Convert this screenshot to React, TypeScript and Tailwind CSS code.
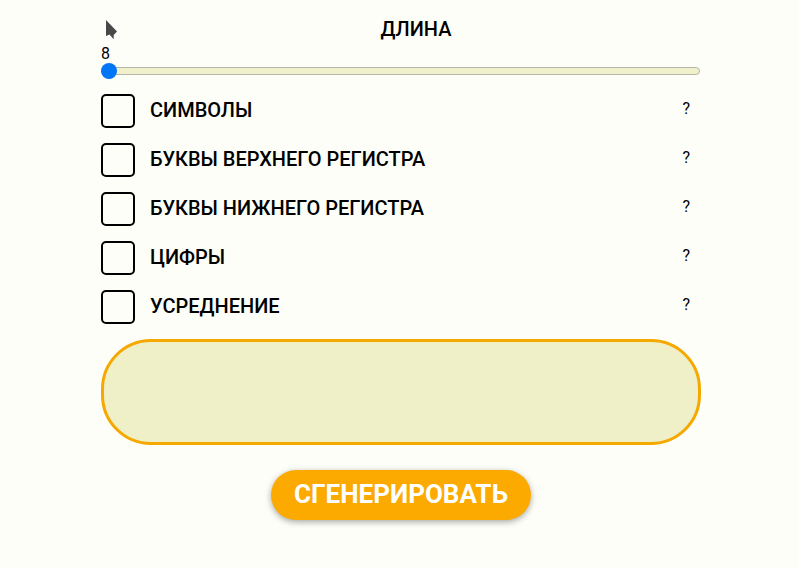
const options = [
  'СИМВОЛЫ',
  'БУКВЫ ВЕРХНЕГО РЕГИСТРА',
  'БУКВЫ НИЖНЕГО РЕГИСТРА',
  'ЦИФРЫ',
  'УСРЕДНЕНИЕ',
];

function Option({ label }: { label: string }) {
  return (
    <div className="flex h-[34px] items-center">
      <label className="flex items-center">
        <input
          type="checkbox"
          className="h-[34px] w-[34px] appearance-none rounded-[5px] border-2 border-black"
        />
        <span className="mb-0.5 ml-[15px] text-[20px] leading-6 font-medium whitespace-nowrap">{label}</span>
      </label>
      <span className="mr-[11px] mb-[5px] ml-auto text-[16px] leading-5">?</span>
    </div>
  );
}

export default function App() {
  return (
    <main className="h-[568px] overflow-hidden bg-[#fefef9] pt-[17px] pl-[101px] font-['Roboto','Liberation_Sans',sans-serif] text-black">
      <svg
        className="pointer-events-none absolute top-[19px] left-[105px] h-[22px] w-[14px]"
        viewBox="0 0 14 22"
        aria-hidden="true"
      >
        <path d="M1 1V17L4.5 15.5L8.7 20.3V16L12 12.5Z" fill="#484848" />
      </svg>
      <div className="flex w-[600px] flex-col">
        <h1 className="mr-[-30px] text-center text-[20px] leading-6 font-medium">ДЛИНА</h1>
        <output className="mt-[3px] block h-[19px] text-[16px] leading-[19px]">8</output>
        <div className="flex h-4 items-center rounded-full">
          <div className="flex h-2 w-[599px] items-center rounded-full border border-[#b5b5a8] bg-[#f0f0cc]">
            <div className="-ml-px h-4 w-4 shrink-0 rounded-full bg-[#0075f5]" />
          </div>
        </div>
        <div className="mt-[15px] flex flex-col gap-[15px]">
          {options.map((label) => (
            <Option key={label} label={label} />
          ))}
        </div>
        <div className="mt-[15px] h-[106px] rounded-[50px] border-[3px] border-[#f5a800] bg-[#efefc8]" />
        <button className="mt-[25px] h-[50px] w-[260px] self-center rounded-full bg-[#fca900] pb-0.5 text-[26px] leading-[48px] font-bold whitespace-nowrap text-white shadow-[0_2px_6px_rgba(0,0,0,0.35)]">
          СГЕНЕРИРОВАТЬ
        </button>
      </div>
    </main>
  );
}
